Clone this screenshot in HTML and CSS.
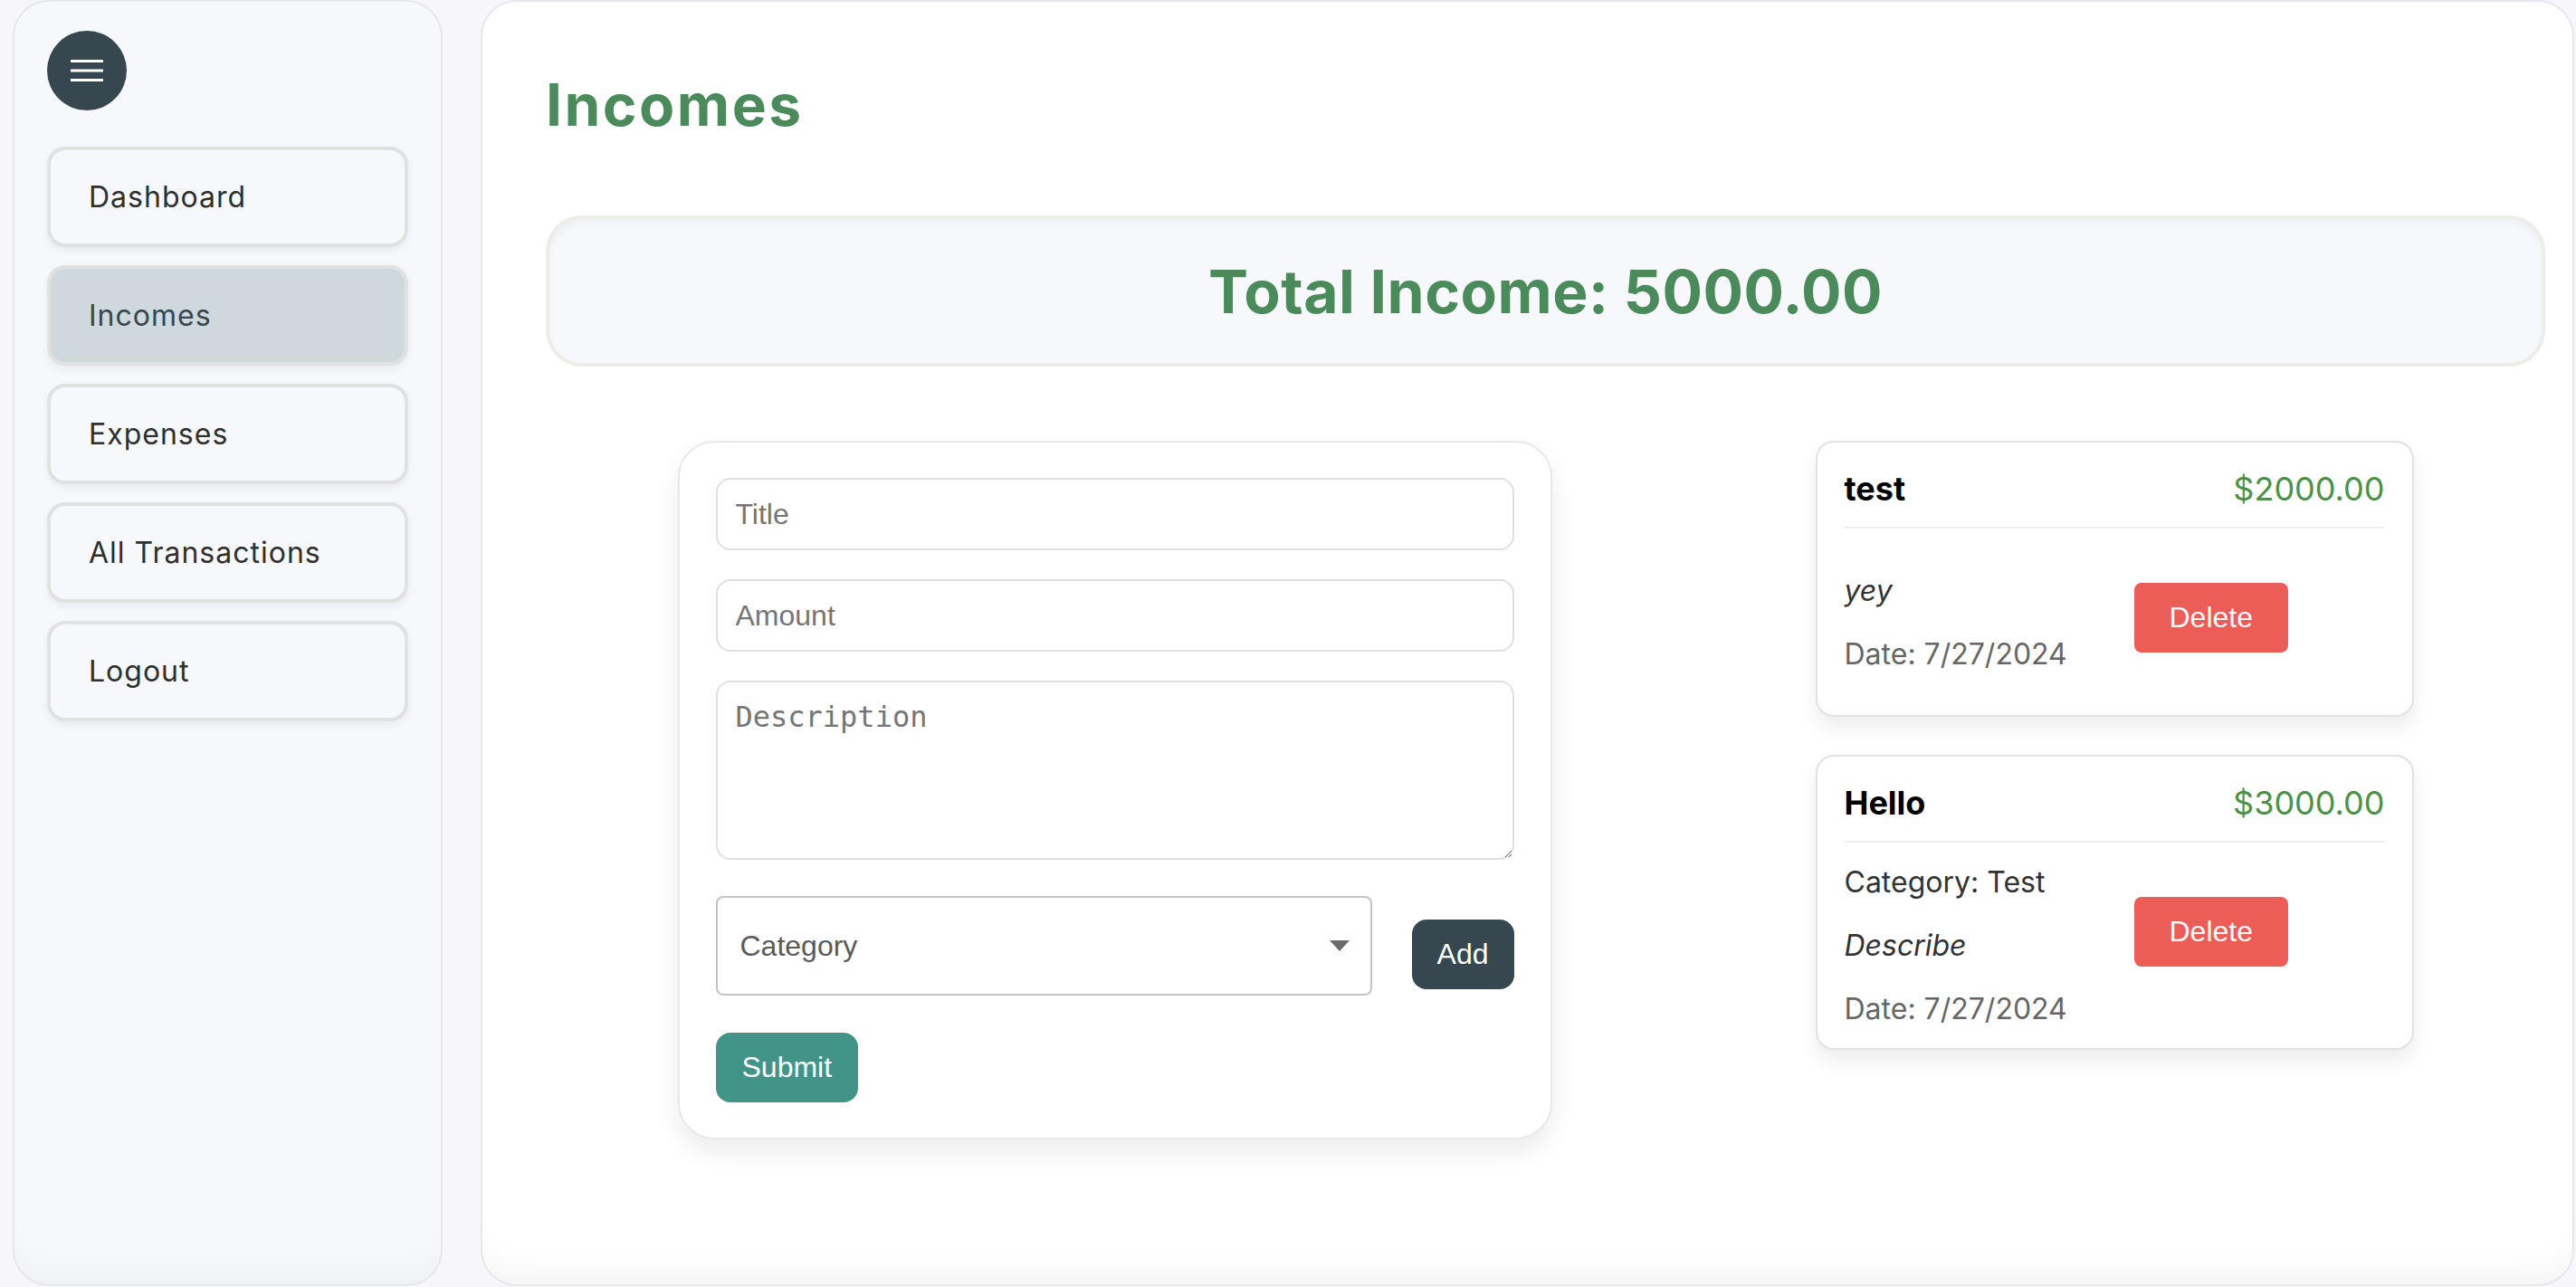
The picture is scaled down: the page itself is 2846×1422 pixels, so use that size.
FILE: index.html
```html
<!DOCTYPE html>
<html lang="en">
<head>
<meta charset="utf-8">
<title>Incomes</title>
<link rel="stylesheet" href="styles.css">
</head>
<body>
<div class="app">
  <aside class="sidebar">
    <button class="menu-btn" type="button" aria-label="Menu">
      <svg width="36" height="28" viewBox="0 0 36 28"><path d="M0 3.5H36M0 14H36M0 24.5H36" stroke="#fff" stroke-width="3" fill="none"/></svg>
    </button>
    <nav class="nav">
      <a class="nav-item">Dashboard</a>
      <a class="nav-item active">Incomes</a>
      <a class="nav-item">Expenses</a>
      <a class="nav-item">All Transactions</a>
      <a class="nav-item">Logout</a>
    </nav>
  </aside>
  <main class="main">
    <h1 class="page-title">Incomes</h1>
    <div class="total-box"><h2 class="total-text">Total Income: 5000.00</h2></div>
    <div class="income-content">
      <form class="form-card">
        <input class="field" type="text" placeholder="Title">
        <input class="field" type="text" placeholder="Amount">
        <textarea class="field area" placeholder="Description"></textarea>
        <div class="select-row">
          <div class="select-wrap">
            <select class="select">
              <option>Category</option>
            </select>
            <svg class="select-arrow" width="22" height="12" viewBox="0 0 22 12"><path d="M0 0H22L11 12Z" fill="#6b6b6b"/></svg>
          </div>
          <button class="btn btn-add" type="button">Add</button>
        </div>
        <button class="btn btn-submit" type="button">Submit</button>
      </form>
      <div class="income-list">
        <div class="income-card">
          <div class="card-head">
            <span class="card-title">test</span>
            <span class="card-amount">$2000.00</span>
          </div>
          <div class="card-body">
            <div class="card-col">
              <p class="desc">yey</p>
              <p class="date">Date: 7/27/2024</p>
            </div>
            <button class="btn btn-delete" type="button">Delete</button>
          </div>
        </div>
        <div class="income-card">
          <div class="card-head">
            <span class="card-title">Hello</span>
            <span class="card-amount">$3000.00</span>
          </div>
          <div class="card-body">
            <div class="card-col">
              <p class="cat">Category: Test</p>
              <p class="desc">Describe</p>
              <p class="date">Date: 7/27/2024</p>
            </div>
            <button class="btn btn-delete" type="button">Delete</button>
          </div>
        </div>
      </div>
    </div>
  </main>
</div>
</body>
</html>
```
FILE: styles.css
```css
* { box-sizing: border-box; }

html, body {
  margin: 0;
  padding: 0;
  height: 1422px;
  overflow: hidden;
  background: #f6f6fb;
  font-family: Inter, "Noto Sans", sans-serif;
}

.app {
  display: flex;
  gap: 42px;
  padding: 0 2px 0 14px;
  height: 1422px;
}

.sidebar {
  width: 475px;
  height: 1421px;
  flex: none;
  background: #f7f8fc;
  border: 2px solid #e6e7eb;
  border-radius: 40px;
  padding: 32px 36px;
  box-shadow: inset 0 -40px 40px -30px rgba(0,0,0,0.04);
}

.menu-btn {
  width: 88px;
  height: 88px;
  border-radius: 50%;
  border: none;
  background: #37474f;
  display: flex;
  align-items: center;
  justify-content: center;
  padding: 0;
  margin-bottom: 40px;
}
.menu-btn svg { display: block; }

.nav {
  display: flex;
  flex-direction: column;
  gap: 20px;
}

.nav-item {
  height: 111px;
  display: flex;
  align-items: center;
  padding: 0 42px;
  border: 4px solid #e1e1e1;
  border-radius: 20px;
  background: #f7f8fc;
  color: #2f2f2f;
  font-size: 32px;
  line-height: 39px;
  letter-spacing: 1px;
  box-shadow: 0 4px 10px rgba(0,0,0,0.06);
}
.nav-item.active {
  background: #cfd8dc;
  color: #37474f;
}

.main {
  flex: 1;
  height: 1421px;
  background: #ffffff;
  border: 2px solid #e6e7eb;
  border-radius: 40px;
  padding: 75px 30px 0 70px;
  box-shadow: inset 0 -40px 40px -30px rgba(0,0,0,0.05);
}

.page-title {
  margin: 0 0 84px;
  font-size: 64px;
  line-height: 77px;
  font-weight: 700;
  letter-spacing: 2.5px;
  color: #4a8a5b;
}

.total-box {
  height: 167px;
  border: 4px solid #ededE7;
  border-radius: 40px;
  background: #f7f8fc;
  display: flex;
  align-items: center;
  justify-content: center;
  margin-bottom: 82px;
  box-shadow: inset 0 5px 8px rgba(0,0,0,0.04);
}

.total-text {
  margin: 0;
  font-size: 66px;
  line-height: 80px;
  font-weight: 700;
  color: #4a8a5b;
  letter-spacing: 0.5px;
}

.income-content {
  display: flex;
  justify-content: space-around;
  align-items: flex-start;
}

.form-card {
  width: 966px;
  background: #fff;
  border: 2px solid #e8e8e8;
  border-radius: 40px;
  padding: 39px 40px;
  display: flex;
  flex-direction: column;
  box-shadow: 0 14px 28px rgba(0,0,0,0.08);
}

.field {
  width: 100%;
  height: 80px;
  border: 2px solid #e0e0e0;
  border-radius: 16px;
  padding: 0 20px;
  font-family: "Liberation Sans", Arial, sans-serif;
  font-size: 32px;
  color: #333;
  background: #fff;
  margin: 0 0 32px;
  outline: none;
}
.field::placeholder { color: #757575; }

.area {
  height: 198px;
  padding: 20px;
  font-family: "DejaVu Sans Mono", monospace;
  font-size: 32px;
  line-height: 37px;
  margin-bottom: 40px;
  resize: vertical;
}

.select-row {
  display: flex;
  justify-content: space-between;
  align-items: flex-start;
}

.select-wrap {
  position: relative;
  width: 725px;
}

.select {
  width: 100%;
  height: 110px;
  appearance: none;
  -webkit-appearance: none;
  border: 2px solid #c4c4c4;
  border-radius: 8px;
  background: #fff;
  padding: 0 25px;
  font-family: "Liberation Sans", Arial, sans-serif;
  font-size: 32px;
  color: #5a5a5a;
  outline: none;
}

.select-arrow {
  position: absolute;
  right: 25px;
  top: 49px;
}

.btn {
  border: none;
  font-family: "Liberation Sans", Arial, sans-serif;
  font-size: 32px;
  line-height: 37px;
  color: #fff;
  cursor: pointer;
}

.btn-add {
  margin-top: 26px;
  height: 77px;
  padding: 0 28px;
  border-radius: 16px;
  background: #37474f;
}

.btn-submit {
  align-self: flex-start;
  margin-top: 41px;
  height: 77px;
  padding: 0 29px;
  border-radius: 16px;
  background: #439488;
}

.income-list {
  width: 661px;
  display: flex;
  flex-direction: column;
  gap: 42px;
}

.income-card {
  background: #fff;
  border: 2px solid #e2e2e2;
  border-radius: 20px;
  padding: 29px 30px 28px;
  box-shadow: 0 12px 22px rgba(0,0,0,0.08);
}

.card-head {
  display: flex;
  justify-content: space-between;
  align-items: baseline;
  line-height: 44px;
  padding-bottom: 20px;
  border-bottom: 2px solid #eeeeee;
}

.card-title {
  font-size: 36px;
  font-weight: 700;
  color: #000;
}

.card-amount {
  font-size: 36px;
  color: #4b9148;
}

.card-body {
  display: flex;
  align-items: center;
  padding-top: 20px;
  min-height: 178px;
}

.card-col {
  width: 300px;
  display: flex;
  flex-direction: column;
  gap: 31px;
  margin: 4px 0 -4px;
}

.card-col p {
  margin: 0;
  font-size: 32px;
  line-height: 39px;
  color: #333;
}
.card-col .desc { font-style: italic; }
.card-col .date { color: #666; }

.btn-delete {
  align-self: flex-start;
  margin: 40px 0 0 20px;
  height: 77px;
  padding: 0 39px;
  border-radius: 8px;
  background: #ec5d57;
}
```
